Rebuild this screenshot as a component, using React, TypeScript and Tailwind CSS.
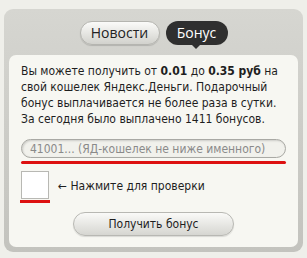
export default function App() {
  return (
    <div className="w-[307px] h-[258px] bg-[#efefea] pt-[9px] px-[4px]" style={{ fontFamily: '"DejaVu Sans Condensed", "DejaVu Sans", Tahoma, sans-serif' }}>
      <div className="h-[243px] rounded-[9px] bg-gradient-to-b from-[#d6d6d1] to-[#c3c3be] px-[5px] pb-[5px] flex flex-col">
        <div className="h-[46px] flex items-center justify-center gap-[6px] pt-[2px]" style={{ fontFamily: '"Open Sans", "DejaVu Sans", sans-serif' }}>
          <div className="h-[24px] w-[80px] rounded-full bg-gradient-to-b from-[#fbfbf9] to-[#d2d2cd] border border-[#b5b5b0] shadow-[0_1px_1px_rgba(0,0,0,0.15)] flex items-center justify-center text-[14px] text-[#222] leading-none">Новости</div>
          <div className="relative h-[24px] w-[62px] rounded-full bg-[#2f2f2f] flex items-center justify-center text-[14px] text-white leading-none">
            Бонус
            <div className="absolute left-[26px] bottom-[-4px] w-0 h-0 border-l-[4px] border-r-[4px] border-t-[4px] border-l-transparent border-r-transparent border-t-[#2f2f2f]"></div>
          </div>
        </div>
        <div className="flex-1 rounded-[7px] bg-[#f7f7f2] px-[12px] pt-[8px] flex flex-col">
          <p className="text-[12px] leading-[16px] text-[#1e1e1e]">
            Вы можете получить от <b>0.01</b> до <b>0.35 руб</b> на свой кошелек Яндекс.Деньги. Подарочный бонус выплачивается не более раза в сутки. За сегодня было выплачено 1411 бонусов.
          </p>
          <div className="mt-[12px] h-[19px] w-[265px] rounded-full border border-[#a9a9a4] bg-[#f1f1ec] shadow-[inset_1px_1px_2px_rgba(0,0,0,0.15)] flex items-center pl-[8px] text-[12px] text-[#8a8a8a]">
            41001... (ЯД-кошелек не ниже именного)
          </div>
          <div className="mt-[3px] h-[3px] w-[265px] rounded-full bg-[#dd1111]"></div>
          <div className="mt-[7px] flex items-center gap-[8px]">
            <div className="flex flex-col">
              <div className="w-[28px] h-[28px] bg-white border border-[#b8b8b3]"></div>
              <div className="mt-[1px] h-[3px] w-[30px] -ml-[1px] bg-[#dd1111]"></div>
            </div>
            <div className="text-[12px] text-[#1e1e1e] -mt-[2px]">← Нажмите для проверки</div>
          </div>
          <div className="mt-[9px] flex justify-center">
            <div className="h-[24px] w-[161px] rounded-full border border-[#b8b8b3] bg-gradient-to-b from-[#fafaf8] to-[#d6d6d1] shadow-[0_1px_1px_rgba(0,0,0,0.12)] flex items-center justify-center text-[12px] text-[#1e1e1e]">
              Получить бонус
            </div>
          </div>
        </div>
      </div>
    </div>
  );
}
